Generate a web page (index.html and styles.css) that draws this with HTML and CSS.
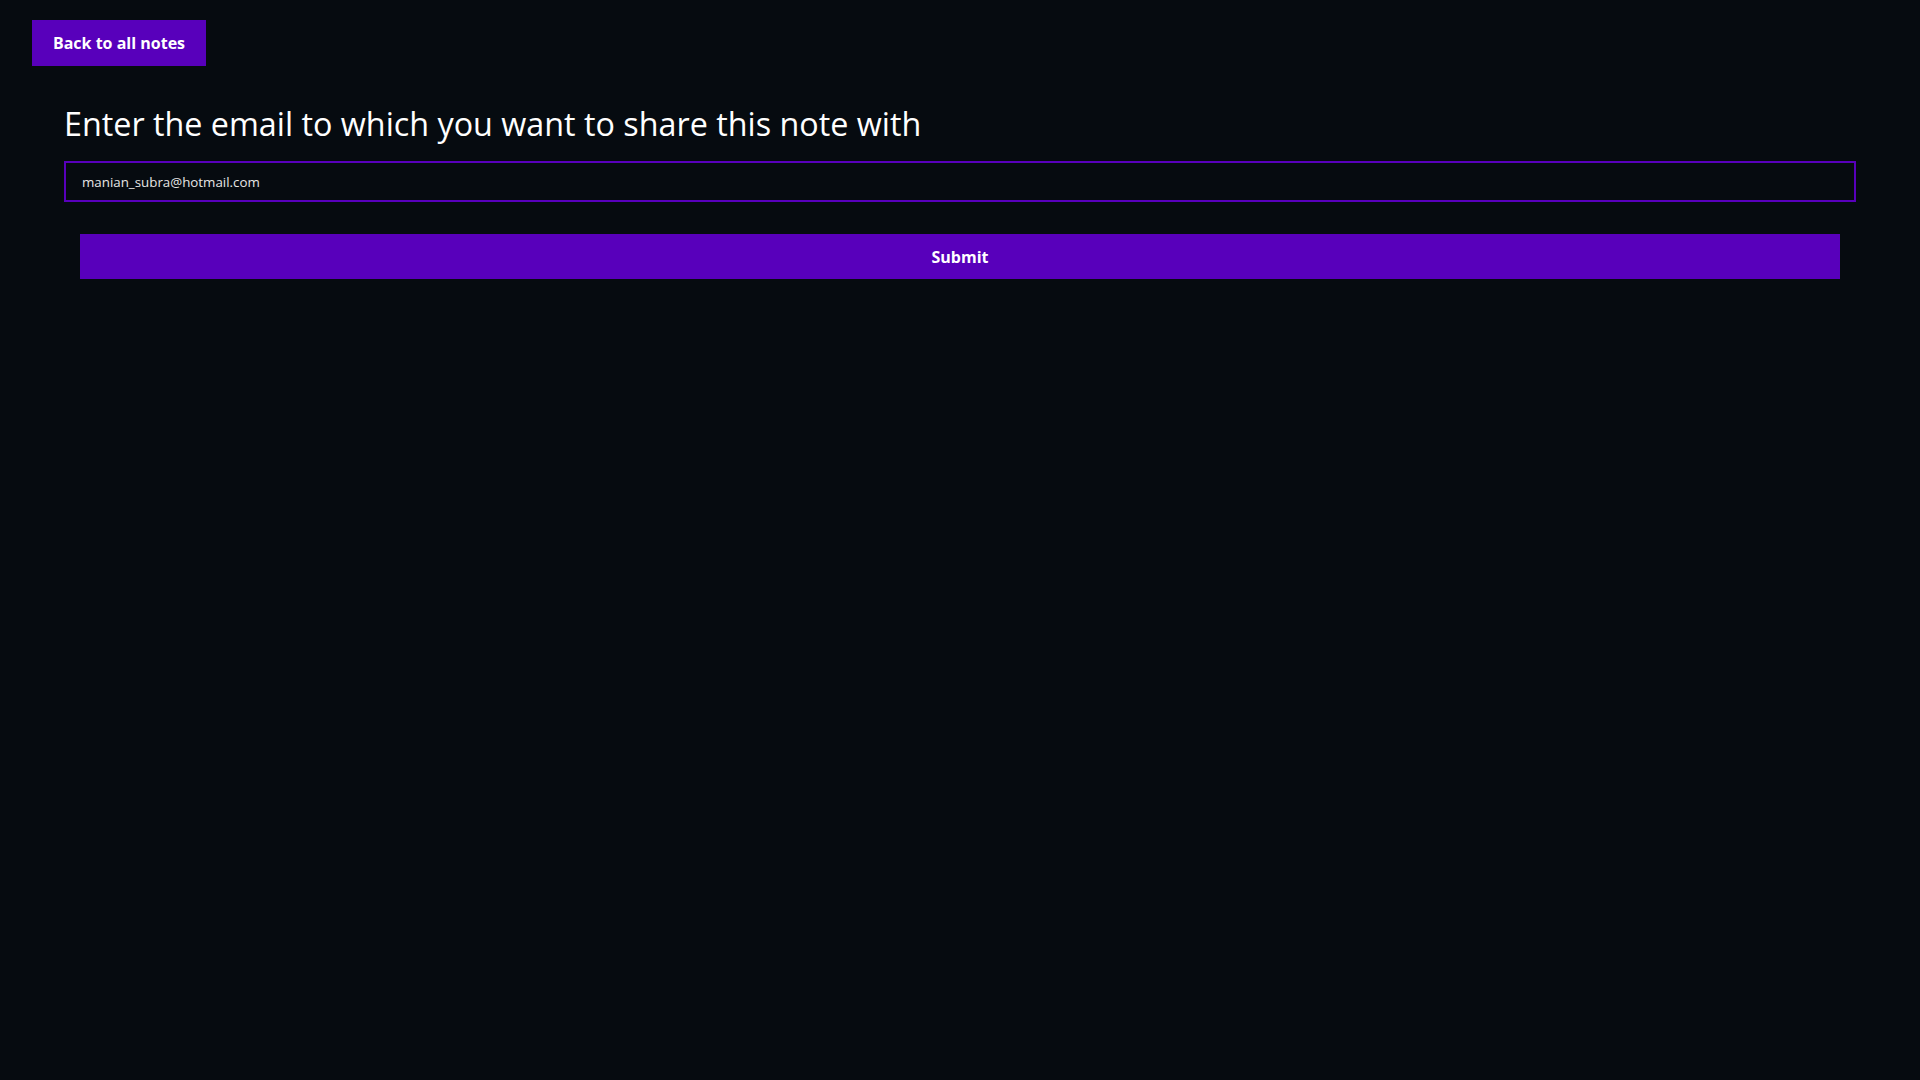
FILE: index.html
```html
<!DOCTYPE html>
<html lang="en">
<head>
<meta charset="utf-8">
<title>Share note</title>
<link rel="stylesheet" href="styles.css">
</head>
<body>
<div class="top">
  <button class="back-btn" type="button">Back to all notes</button>
</div>
<main class="share">
  <h1 class="share-title">Enter the email to which you want to share this note with</h1>
  <form class="share-form">
    <input class="email-input" type="email" value="manian_subra@hotmail.com">
    <button class="submit-btn" type="button">Submit</button>
  </form>
</main>
</body>
</html>
```
FILE: styles.css
```css
* { box-sizing: border-box; }
html, body {
  margin: 0;
  padding: 0;
  background: #060b10;
  height: 100%;
}
body {
  font-family: "Open Sans", "Noto Sans", sans-serif;
  color: #ffffff;
}
.top {
  padding: 20px 32px 0;
}
.back-btn {
  display: inline-block;
  width: 174px;
  background: #5800bb;
  color: #fff;
  border: none;
  font-family: inherit;
  font-weight: 700;
  font-size: 16px;
  height: 46px;
  padding: 0;
  text-align: center;
  cursor: pointer;
}
.share {
  padding: 0 64px;
}
.share-title {
  margin: 35px 0 16px;
  font-weight: 400;
  font-size: 32.3px;
  line-height: 44px;
}
.share-form {
  display: flex;
  flex-direction: column;
  gap: 32px;
}
.email-input {
  width: 100%;
  height: 41px;
  background: #060b10;
  border: 2px solid #5800bb;
  color: #e6e6e6;
  font-family: inherit;
  font-size: 13.333px;
  padding: 0 16px;
  outline: none;
}
.submit-btn {
  margin: 0 16px;
  height: 45px;
  background: #5800bb;
  color: #fff;
  border: none;
  font-family: inherit;
  font-weight: 700;
  font-size: 16px;
  cursor: pointer;
}
```
